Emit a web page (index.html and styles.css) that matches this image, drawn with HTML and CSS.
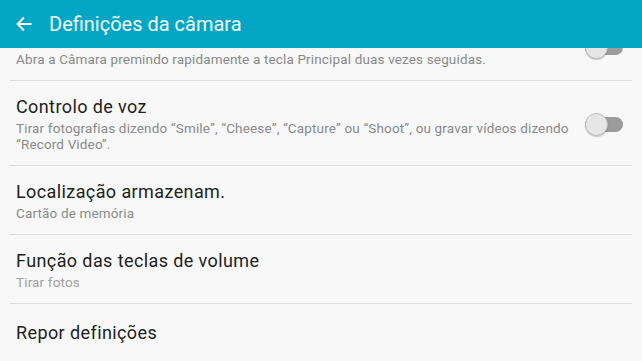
FILE: index.html
```html
<!DOCTYPE html>
<html lang="pt">
<head>
<meta charset="utf-8">
<title>Definições da câmara</title>
<link rel="stylesheet" href="styles.css">
</head>
<body>
<header class="appbar">
  <svg class="back" width="16" height="16" viewBox="0 0 16 16" aria-hidden="true">
    <path d="M15.5 8H1.5M8 1.5L1.5 8L8 14.5" fill="none" stroke="#ffffff" stroke-width="1.8"/>
  </svg>
  <h1 class="appbar-title">Definições da câmara</h1>
</header>
<main class="viewport">
  <div class="list">
    <div class="row">
      <div class="row-text">
        <div class="row-title">Início rápido</div>
        <div class="row-sub">Abra a Câmara premindo rapidamente a tecla Principal duas vezes seguidas.</div>
      </div>
      <span class="switch"><span class="knob"></span></span>
    </div>
    <div class="row">
      <div class="row-text">
        <div class="row-title">Controlo de voz</div>
        <div class="row-sub">Tirar fotografias dizendo “Smile”, “Cheese”, “Capture” ou “Shoot”, ou gravar vídeos dizendo “Record Video”.</div>
      </div>
      <span class="switch"><span class="knob"></span></span>
    </div>
    <div class="row">
      <div class="row-text">
        <div class="row-title">Localização armazenam.</div>
        <div class="row-sub">Cartão de memória</div>
      </div>
    </div>
    <div class="row">
      <div class="row-text">
        <div class="row-title">Função das teclas de volume</div>
        <div class="row-sub light">Tirar fotos</div>
      </div>
    </div>
    <div class="row single">
      <div class="row-text">
        <div class="row-title">Repor definições</div>
      </div>
    </div>
  </div>
</main>
</body>
</html>
```
FILE: styles.css
```css
html, body {
  margin: 0;
  padding: 0;
  background: #f8f8f8;
  font-family: Roboto, "Noto Sans", "Liberation Sans", sans-serif;
  overflow: hidden;
  height: 361px;
}

.appbar {
  height: 48px;
  background: #03a5c4;
  display: flex;
  align-items: center;
  padding-left: 16px;
  box-sizing: border-box;
}

.back {
  display: block;
  flex: none;
}

.appbar-title {
  margin: 0 0 0 17px;
  font-size: 20px;
  font-weight: 400;
  color: #f2fbfd;
  line-height: 24px;
}

.viewport {
  height: 313px;
  overflow: hidden;
}

.list {
  margin: -36px 10px 0 10px;
}

.row {
  display: flex;
  align-items: center;
  border-bottom: 1px solid #dcdcdc;
  padding: 16px 9px 13px 6px;
}

.row.single {
  border-bottom: none;
  padding-top: 19px;
}

.row-text {
  flex: 1;
  min-width: 0;
  padding-right: 6px;
}

.row-title {
  font-size: 18px;
  letter-spacing: 0.4px;
  line-height: 20px;
  color: #212121;
}

.row-sub {
  margin-top: 3px;
  font-size: 13.5px;
  letter-spacing: 0.15px;
  line-height: 16px;
  color: #8a8a8a;
}

.row-sub.light {
  color: #a2a2a2;
}

.switch {
  flex: none;
  position: relative;
  width: 38px;
  height: 15px;
  border-radius: 8px;
  background: #9b9b9b;
}

.knob {
  position: absolute;
  left: 0;
  top: -4px;
  width: 21px;
  height: 21px;
  border-radius: 50%;
  background: #e6e6e6;
  border: 1px solid #bdbdbd;
  box-shadow: 0 1px 1px rgba(0, 0, 0, 0.18);
}
```
